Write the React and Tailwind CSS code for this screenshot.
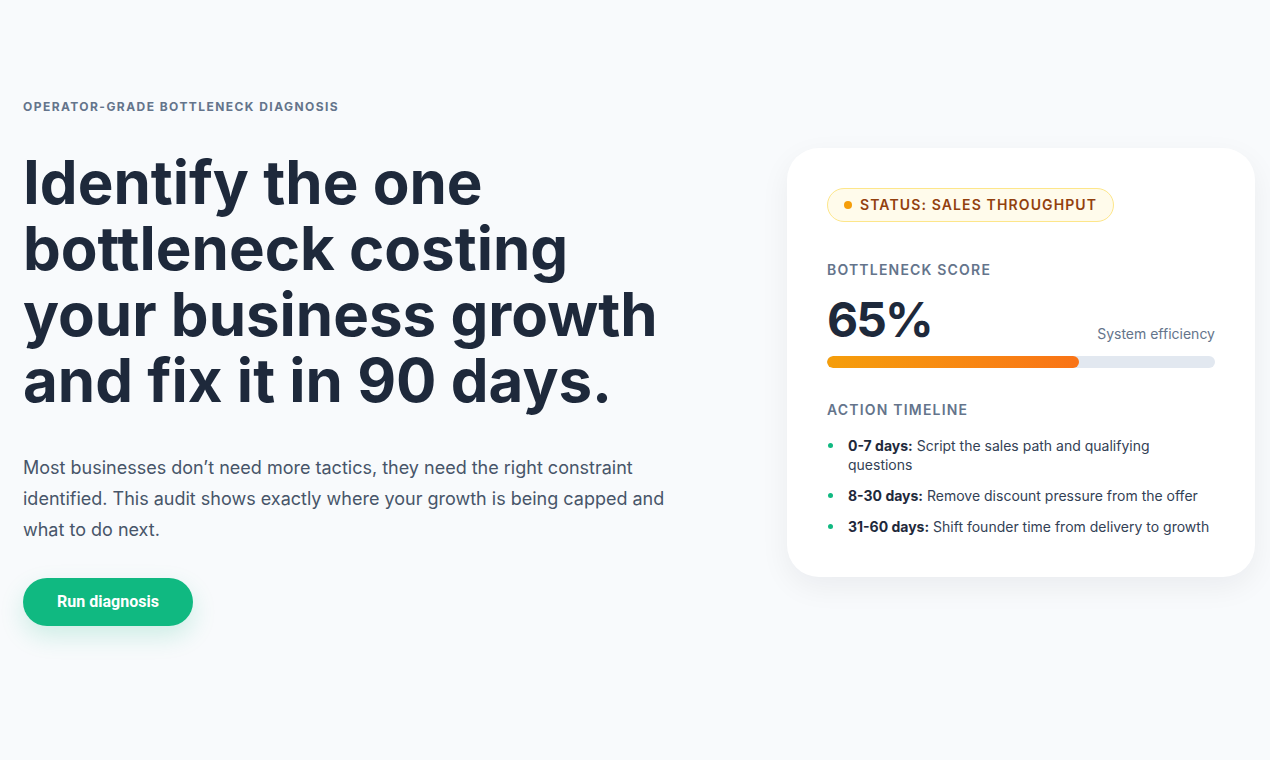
export default function App() {
  const steps = [
    { range: '0-7 days:', text: 'Script the sales path and qualifying questions' },
    { range: '8-30 days:', text: 'Remove discount pressure from the offer' },
    { range: '31-60 days:', text: 'Shift founder time from delivery to growth' },
  ]
  const score = 65

  return (
    <div className="min-h-screen bg-[#f8fafc] font-['Inter',sans-serif] text-[#1e293b]">
      <div className="grid grid-cols-[1fr_468px] items-center gap-12 pl-[23px] pr-[15px] pt-[99px] pb-10">
        <div>
          <p className="text-xs font-bold uppercase tracking-[0.12em] text-[#64748b]">
            Operator-grade bottleneck diagnosis
          </p>
          <h1 className="mt-[34px] max-w-[660px] text-[60px] font-bold leading-[66px] text-[#1e293b]">
            Identify the one bottleneck costing your business growth and fix it in 90 days.
          </h1>
          <p className="mt-[39px] max-w-[660px] text-lg leading-[31px] text-[#475569]">
            Most businesses don’t need more tactics, they need the right constraint identified. This audit
            shows exactly where your growth is being capped and what to do next.
          </p>
          <button className="mt-[33px] h-12 w-[170px] rounded-full bg-[#10b981] font-['Roboto',sans-serif] text-base font-bold text-white shadow-[0_10px_24px_rgba(16,185,129,0.18)]">
            Run diagnosis
          </button>
        </div>

        <div className="rounded-[32px] bg-white px-10 pt-10 pb-[41px] shadow-[0_10px_30px_rgba(15,23,42,0.06)]">
          <span className="inline-flex h-[34px] items-center gap-2 rounded-full border border-[#fde68a] bg-[#fffbeb] px-4 text-sm font-semibold uppercase tracking-[0.08em] text-[#92400e]">
            <span className="h-2 w-2 rounded-full bg-[#f59e0b]" />
            Status: Sales throughput
          </span>

          <p className="mt-[38px] text-sm font-semibold uppercase tracking-[0.085em] text-[#64748b]">
            Bottleneck score
          </p>
          <div className="mt-4 flex items-end justify-between">
            <span className="text-5xl font-bold leading-none tracking-[-0.04em] text-[#1e293b]">{score}%</span>
            <span className="text-sm text-[#64748b]">System efficiency</span>
          </div>
          <div className="mt-3 h-3 w-full overflow-hidden rounded-full bg-[#e2e8f0]">
            <div
              className="h-full rounded-full bg-gradient-to-r from-[#f59e0b] to-[#f97316]"
              style={{ width: `${score}%` }}
            />
          </div>

          <p className="mt-8 text-sm font-semibold uppercase tracking-[0.085em] text-[#64748b]">
            Action timeline
          </p>
          <ul className="mt-4 space-y-3 text-sm leading-[19px] text-[#334155]">
            {steps.map((s) => (
              <li key={s.range} className="flex gap-[15px]">
                <span className="ml-px mt-[7px] h-[5px] w-[5px] shrink-0 rounded-full bg-[#10b981]" />
                <p>
                  <strong className="font-bold text-[#1e293b]">{s.range}</strong> {s.text}
                </p>
              </li>
            ))}
          </ul>
        </div>
      </div>
    </div>
  )
}
